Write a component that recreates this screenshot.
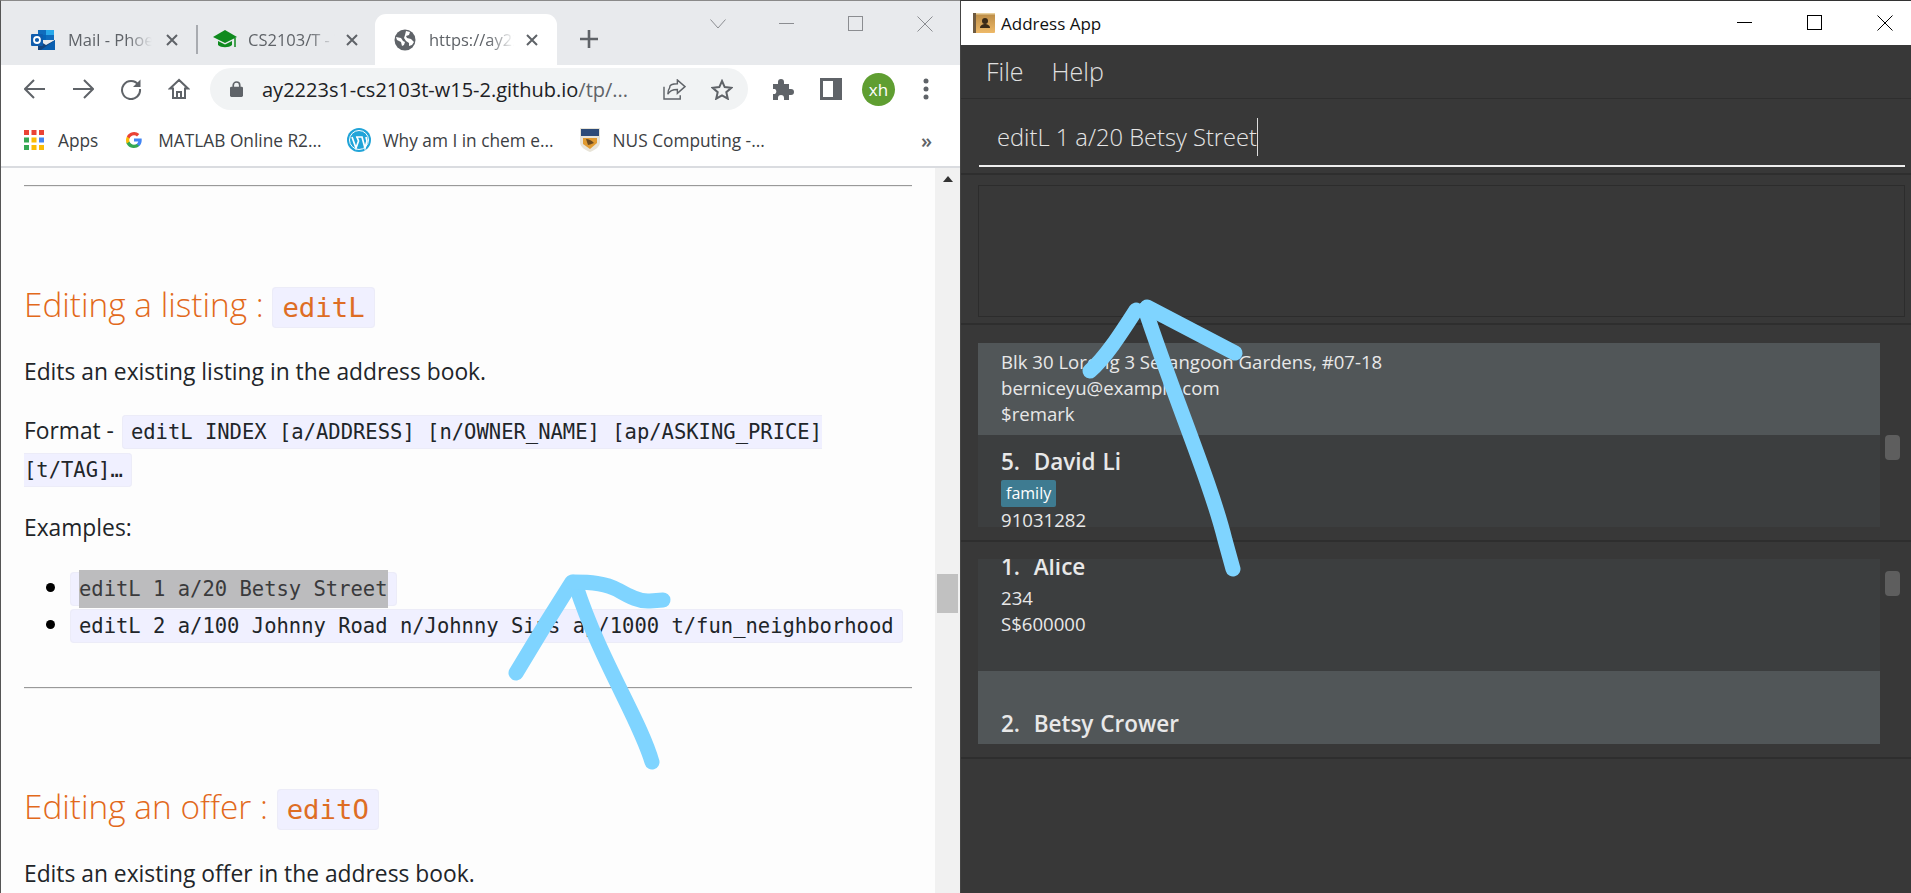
<div class="desktop">
  <section class="browser">
    <header class="tabstrip">
      <div class="tab t1">
        <svg class="fav" viewBox="0 0 24 22" width="24" height="22"><path fill="#0f6cbd" d="M7 1h16v10H7z"/><path fill="#28a8ea" d="M15 1h8v5h-8z"/><path fill="#0364b8" d="M7 6h8v5H7z"/><path fill="#14447d" d="M7 11l8 5 9-5v10H7z"/><path fill="#0a5fb0" d="M24 11v10H10z"/><rect x="0" y="5" width="12" height="12" rx="1" fill="#0f5cad"/><circle cx="6" cy="11" r="3" fill="none" stroke="#fff" stroke-width="1.8"/></svg>
        <span class="tabtext">Mail - Phoebe Tan</span>
        <svg class="x" viewBox="0 0 12 12" width="12" height="12"><path d="M1 1l10 10M11 1L1 11" stroke="#5f6368" stroke-width="2"/></svg>
      </div>
      <i class="tabsep"></i>
      <div class="tab t2">
        <svg class="fav" viewBox="0 0 24 20" width="24" height="20"><path fill="#0f8a1e" d="M12 0L0 7l12 6 12-6z"/><path fill="#0f8a1e" d="M5 11v4c3 3 11 3 14 0v-4l-7 3.500z"/><path d="M22 8v9" stroke="#0f8a1e" stroke-width="1.500"/></svg>
        <span class="tabtext">CS2103/T - Week</span>
        <svg class="x" viewBox="0 0 12 12" width="12" height="12"><path d="M1 1l10 10M11 1L1 11" stroke="#5f6368" stroke-width="2"/></svg>
      </div>
      <div class="tab active">
        <svg class="fav" viewBox="0 0 22 22" width="22" height="22"><circle cx="11" cy="11" r="10.500" fill="#5f6368"/><path fill="#fff" d="M2 8l5 1 2 3 2 1-1 3-2 1-1-4-4-2zM12 2l4 1-1 3-3 1 1 2 4 1 3 3-2 3-3 1 0-3-3-2-2-3 1-3z"/></svg>
        <span class="tabtext">https://ay2223s1</span>
        <svg class="x" viewBox="0 0 12 12" width="12" height="12"><path d="M1 1l10 10M11 1L1 11" stroke="#5f6368" stroke-width="2"/></svg>
      </div>
      <svg class="plus" viewBox="0 0 18 18" width="18" height="18"><path d="M9 0v18M0 9h18" stroke="#5f6368" stroke-width="2.600"/></svg>
      <div class="wincontrols">
        <svg viewBox="0 0 16 10" width="16" height="10"><path d="M.5.5L8 9l7.500-8.500" fill="none" stroke="#8b8d91"/></svg>
        <svg viewBox="0 0 16 16" width="16" height="16"><path d="M0 7.500h15" stroke="#8b8d91"/></svg>
        <svg viewBox="0 0 16 16" width="16" height="16"><rect x=".5" y=".5" width="14" height="14" fill="none" stroke="#8b8d91"/></svg>
        <svg viewBox="0 0 16 16" width="16" height="16"><path d="M.5.500l15 15M15.500.500l-15 15" stroke="#8b8d91"/></svg>
      </div>
    </header>

    <nav class="toolbar">
      <svg viewBox="0 0 22 20" width="22" height="20"><path d="M21 10H2M10 1l-9 9 9 9" fill="none" stroke="#5f6368" stroke-width="2"/></svg>
      <svg viewBox="0 0 22 20" width="22" height="20"><path d="M1 10h19M12 1l9 9-9 9" fill="none" stroke="#5f6368" stroke-width="2"/></svg>
      <svg viewBox="0 0 22 22" width="22" height="22"><path d="M18.500 7A9 9 0 1 0 20 11" fill="none" stroke="#5f6368" stroke-width="2"/><path d="M20.500 1.500v7.500h-7.500z" fill="#5f6368"/></svg>
      <svg viewBox="0 0 22 22" width="22" height="22"><path d="M11 2L2 10.500h3V20h12v-9.500h3zM9 20v-6h4v6" fill="none" stroke="#5f6368" stroke-width="2"/></svg>
      <div class="omnibox">
        <svg class="lock" viewBox="0 0 14 17" width="13" height="16"><path d="M3.500 7V4.500a3.500 3.500 0 0 1 7 0V7" fill="none" stroke="#5f6368" stroke-width="1.800"/><rect y="6" width="14" height="11" rx="1.500" fill="#5f6368"/></svg>
        <span class="url"><b>ay2223s1-cs2103t-w15-2.github.io</b>/tp/...</span>
        <svg class="share" viewBox="0 0 24 22" width="23" height="21"><path d="M7 9v-.5C7 6 11 5 15 5V1l8 7-8 7v-4c-5 0-8 1-10 5 0-3 .500-5 2-7z" fill="none" stroke="#5f6368" stroke-width="1.500"/><path d="M1 8v13h17v-4" fill="none" stroke="#5f6368" stroke-width="1.500"/></svg>
        <svg class="star" viewBox="0 0 22 21" width="22" height="21"><path d="M11 2l2.700 6.100 6.600.7-5 4.400 1.500 6.500L11 16.300l-5.800 3.400 1.500-6.500-5-4.400 6.600-.7z" fill="none" stroke="#5f6368" stroke-width="2"/></svg>
      </div>
      <svg class="puzzle" viewBox="0 0 22 22" width="22" height="22"><path fill="#5f6368" d="M1 6h5V4a3 3 0 0 1 6 0v2h5v5h2a3 3 0 0 1 0 6h-2v5h-5v-2a3 3 0 0 0-6 0v2H1v-6h2a3 3 0 0 0 0-5H1z"/></svg>
      <svg class="panel" viewBox="0 0 22 22" width="22" height="22"><rect width="22" height="22" fill="#5f6368"/><rect x="3" y="3" width="10" height="16" fill="#fff"/></svg>
      <span class="avatar">xh</span>
      <svg class="dots" viewBox="0 0 6 22" width="6" height="22"><circle cx="3" cy="3" r="2.500" fill="#5f6368"/><circle cx="3" cy="11" r="2.500" fill="#5f6368"/><circle cx="3" cy="19" r="2.500" fill="#5f6368"/></svg>
    </nav>

    <div class="bookmarks">
      <span class="bm apps">
        <svg viewBox="0 0 20 20" width="20" height="20">
          <rect width="5" height="5" fill="#ea4335"/><rect x="7.500" width="5" height="5" fill="#ea4335"/><rect x="15" width="5" height="5" fill="#ea4335"/>
          <rect y="7.500" width="5" height="5" fill="#34a853"/><rect x="7.500" y="7.500" width="5" height="5" fill="#fbbc05"/><rect x="15" y="7.500" width="5" height="5" fill="#4285f4"/>
          <rect y="15" width="5" height="5" fill="#34a853"/><rect x="7.500" y="15" width="5" height="5" fill="#fbbc05"/><rect x="15" y="15" width="5" height="5" fill="#fbbc05"/>
        </svg>Apps</span>
      <span class="bm matlab">
        <svg viewBox="0 0 16 16" width="16" height="16"><path d="M15.700 8.200c0-.600 0-1.100-.100-1.600H8v3h4.300c-.200 1-.700 1.800-1.600 2.400v2h2.600c1.500-1.400 2.400-3.500 2.400-5.800z" fill="#4285f4"/><path d="M8 16c2.200 0 4-.700 5.300-2l-2.600-2c-.700.500-1.600.800-2.700.800-2.100 0-3.900-1.400-4.500-3.300H.5v2.100A8 8 0 0 0 8 16z" fill="#34a853"/><path d="M3.500 9.500a4.800 4.800 0 0 1 0-3V4.400H.9a8 8 0 0 0 0 7.200z" fill="#fbbc05"/><path d="M8 3.200c1.200 0 2.200.400 3 1.200l2.300-2.300A8 8 0 0 0 .9 4.400l2.600 2.100C4.100 4.600 5.900 3.200 8 3.200z" fill="#ea4335"/></svg>MATLAB Online R2...</span>
      <span class="bm wp">
        <svg viewBox="0 0 24 24" width="24" height="24"><circle cx="12" cy="12" r="12" fill="#21a4d8"/><circle cx="12" cy="12" r="9.500" fill="none" stroke="#fff" stroke-width="1"/><path d="M5 9l4 11 2.500-7L10 9h5l3 11 2-7-1-4M9 9h3" fill="none" stroke="#fff" stroke-width="1.700"/></svg>Why am I in chem e...</span>
      <span class="bm nus">
        <svg viewBox="0 0 20 24" width="20" height="24"><path d="M0 0h20v14c0 5-5 8-10 10C5 22 0 19 0 14z" fill="#e8e4d8"/><path d="M1 1h18v7H1z" fill="#2d4b78"/><path d="M3 10h14v5l-7 6-7-5z" fill="#e09a30"/><path d="M6 11c3 0 5 1 8 4-3 1-5 2-6 2z" fill="#6a4a20"/></svg>NUS Computing -...</span>
      <span class="chev">»</span>
    </div>

    <div class="pagewrap">
      <main class="doc">
        <hr class="first" />
        <h2>Editing a listing : <code>editL</code></h2>
        <p class="after">Edits an existing listing in the address book.</p>
        <p class="format">Format - <code>editL INDEX [a/ADDRESS] [n/OWNER_NAME] [ap/ASKING_PRICE] [t/TAG]…</code></p>
        <p class="ex">Examples:</p>
        <ul>
          <li><code><span class="sel">editL 1 a/20 Betsy Street</span></code></li>
          <li><code>editL 2 a/100 Johnny Road n/Johnny Sins ap/1000 t/fun_neighborhood</code></li>
        </ul>
        <hr />
        <h2>Editing an offer : <code>editO</code></h2>
        <p class="after">Edits an existing offer in the address book.</p>
      </main>
      <aside class="pagescroll">
        <svg viewBox="0 0 10 6" width="10" height="6"><path d="M5 0l5 6H0z" fill="#333"/></svg>
        <i class="thumb"></i>
      </aside>
    </div>
  </section>

  <section class="app">
    <header class="titlebar">
      <svg viewBox="0 0 22 20" width="22" height="20"><defs><linearGradient id="book" x1="0" y1="0" x2="0" y2="1"><stop offset="0" stop-color="#b98a45"/><stop offset="1" stop-color="#eeb968"/></linearGradient></defs><rect width="22" height="20" rx="1" fill="url(#book)"/><rect width="3" height="20" fill="#6e5a40"/><rect x="3" y="0" width="19" height="1.500" fill="#e8cf9c"/><circle cx="12" cy="8" r="3" fill="#3a2a18"/><path d="M7 15c0-3 3-4 5-4s5 1 5 4z" fill="#3a2a18"/></svg>
      <span class="apptitle">Address App</span>
      <div class="appcontrols">
        <svg viewBox="0 0 16 16" width="16" height="16"><path d="M0 7.500h15" stroke="#000"/></svg>
        <svg viewBox="0 0 16 16" width="16" height="16"><rect x=".5" y=".5" width="14" height="14" fill="none" stroke="#000"/></svg>
        <svg viewBox="0 0 16 16" width="16" height="16"><path d="M.5.500l15 15M15.500.500l-15 15" stroke="#000"/></svg>
      </div>
    </header>
    <div class="menubar"><span>File</span><span>Help</span></div>
    <div class="command"><div class="cmdinput"><span>editL 1 a/20 Betsy Street</span><i class="caret"></i></div></div>
    <div class="result"><div class="resultbox"></div></div>

    <div class="listsec one">
      <div class="list">
        <div class="row sel-row">
          <div>Blk 30 Lorong 3 Serangoon Gardens, #07-18</div>
          <div>berniceyu@example.com</div>
          <div>$remark</div>
        </div>
        <div class="row">
          <div class="name">5.&nbsp; David Li</div>
          <span class="tag">family</span>
          <div>91031282</div>
        </div>
      </div>
      <i class="appthumb"></i>
    </div>

    <div class="listsec two">
      <div class="list">
        <div class="row">
          <div class="name">1.&nbsp; Alice</div>
          <div class="l1">234</div>
          <div>S$600000</div>
        </div>
        <div class="row sel-row">
          <div class="name">2.&nbsp; Betsy Crower</div>
        </div>
      </div>
      <i class="appthumb"></i>
    </div>
    <div class="rest"></div>
  </section>

  <svg class="ink" viewBox="0 0 1911 893" width="1911" height="893" fill="none" stroke="#7fd4ff" stroke-width="15" stroke-linecap="round" stroke-linejoin="round">
    <path d="M516 673L545 625L572 582"/>
    <path d="M576 586C600 660 640 720 652 762"/>
    <path d="M574 582C590 582 605 583 618 590C630 597 640 602 650 601L663 600"/>
    <path d="M1090 371C1105 358 1120 335 1136 310"/>
    <path d="M1145 309C1175 400 1210 480 1225 540L1233 569"/>
    <path d="M1147 307L1235 353"/>
  </svg>
</div>

<style>
  :global(body) { margin: 0; }
  .desktop { position: relative; width: 1911px; height: 893px; overflow: hidden; display: flex; font-family: "Open Sans", "Noto Sans", sans-serif; background: #333; }
  .ink { position: absolute; left: 0; top: 0; pointer-events: none; }

  .browser { width: 960px; flex: none; display: flex; flex-direction: column; background: #fff; border-left: 1px solid #555; box-sizing: border-box; border-top: 1px solid #8a8a8a; }
  .tabstrip { height: 64px; background: #e8eaed; display: flex; align-items: flex-end; flex: none; }
  .tab { height: 51px; display: flex; align-items: center; color: #5f6368; font-size: 16.500px; box-sizing: border-box; flex: none; }
  .t1 { width: 195px; padding-left: 30px; }
  .t2 { width: 177px; padding-left: 15px; }
  .tabsep { width: 2px; height: 29px; background: #a8abb0; margin-bottom: 11px; flex: none; }
  .active { width: 182px; background: #fff; border-radius: 11px 11px 0 0; padding-left: 19px; }
  .tabtext { flex: none; margin-left: 13px; white-space: nowrap; overflow: hidden; mask-image: linear-gradient(to right, #000 70%, transparent 100%); -webkit-mask-image: linear-gradient(to right, #000 70%, transparent 100%); }
  .t1 .tabtext { width: 84px; }
  .t2 .tabtext { width: 87px; margin-left: 11px; }
  .active .tabtext { width: 85px; }
  .fav { flex: none; }
  .x { margin-left: 12px; flex: none; }
  .t1 .x { margin-left: 14px; }
  .t2 .x { margin-left: 11px; }
  .plus { margin: 0 0 17px 23px; flex: none; }
  .wincontrols { display: flex; align-items: center; gap: 53px; margin-left: 112px; align-self: flex-start; margin-top: 15px; height: 16px; }

  .toolbar { height: 60px; flex: none; display: flex; align-items: center; background: #fff; padding-left: 23px; box-sizing: border-box; }
  .toolbar > svg { margin-top: -12px; flex: none; }
  .toolbar > svg:nth-child(2), .toolbar > svg:nth-child(3), .toolbar > svg:nth-child(4) { margin-left: 26px; }
  .omnibox { margin-left: 20px; width: 538px; height: 42px; border-radius: 21px; background: #f1f3f4; display: flex; align-items: center; flex: none; margin-top: -12px; padding-left: 20px; box-sizing: border-box; }
  .url { margin-left: 19px; width: 370px; flex: none; font-size: 20px; color: #5f6368; white-space: nowrap; }
  .url b { font-weight: 400; color: #202124; }
  .share { margin-left: 31px; flex: none; }
  .star { margin-left: 25px; flex: none; }
  .toolbar > .puzzle { margin-left: 24px; }
  .toolbar > .panel { margin-left: 26px; }
  .avatar { margin-left: 20px; width: 33px; height: 33px; border-radius: 50%; background: #5f9e31; color: #fff; display: flex; align-items: center; justify-content: center; font-size: 17px; margin-top: -12px; flex: none; }
  .toolbar > .dots { margin-left: 28px; }

  .bookmarks { height: 42px; margin-top: -6px; padding-bottom: 5px; flex: none; background: #fff; display: flex; align-items: center; color: #3c4043; font-size: 17.300px; border-bottom: 2px solid #dadce0; white-space: nowrap; }
  .bm { display: flex; align-items: center; gap: 14px; flex: none; }
  .apps { margin-left: 23px; }
  .matlab { margin-left: 28px; gap: 16px; }
  .wp { margin-left: 25px; gap: 12px; }
  .nus { margin-left: 26px; gap: 13px; }
  .chev { margin-left: auto; margin-right: 28px; font-size: 20px; font-weight: 600; color: #5f6368; }

  .pagewrap { flex: 1; display: flex; min-height: 0; background: #fdfdfd; overflow: hidden; }
  .doc { flex: 1; padding: 17px 23px 0 23px; min-width: 0; color: #212529; font-size: 22.800px; }
  hr { border: 0; border-top: 1px solid #999; border-bottom: 1px solid #eee; margin: 0; height: 0; }
  hr:not(.first) { margin-top: 45px; }
  h2 { margin: 96px 0 0; font-weight: 300; font-size: 33.400px; line-height: 42px; color: #e2691b; white-space: nowrap; }
  p { margin: 0; }
  .after { margin-top: 33px; line-height: 28px; }
  .format { margin-top: 26px; line-height: 38px; }
  .format code { margin-left: 2px; }
  .ex { margin-top: 26px; line-height: 28px; }
  ul { margin: 26px 0 0; padding: 0 0 0 46px; line-height: 37px; }
  li { height: 37px; }
  li::marker { font-size: 24px; color: #000; }
  code { font-family: "DejaVu Sans Mono", "Liberation Mono", monospace; font-size: 20.500px; line-height: 1; background: #f0f0ff; border: 1px solid #ececf8; border-radius: 4px; padding: 4px 8px; color: #212529; }
  h2 code { font-size: 27.300px; color: #de6d24; padding: 4px 9px; margin-left: 0; }
  .sel { background: #bcbcbe; padding: 7px 0; color: #3a3a3c; }
  .pagescroll { width: 25px; flex: none; background: #f1f1f1; display: flex; flex-direction: column; align-items: center; padding-top: 8px; box-sizing: border-box; }
  .thumb { width: 21px; height: 39px; background: #c1c1c1; margin-top: 392px; }

  .app { flex: 1; display: flex; flex-direction: column; background: #383838; border-top: 1px solid #333; border-left: 1px solid #444; box-sizing: border-box; }
  .titlebar { height: 44px; flex: none; background: #fff; display: flex; align-items: center; padding-left: 12px; }
  .apptitle { margin-left: 6px; font-size: 17px; color: #111; }
  .appcontrols { margin-left: auto; display: flex; gap: 54px; margin-right: 18px; }
  .menubar { height: 54px; flex: none; display: flex; align-items: center; gap: 28px; padding: 0 0 2px 25px; box-sizing: border-box; border-bottom: 1px solid #2e2e2e; color: #e0e0e0; font-size: 25px; font-weight: 300; }
  .command { height: 76px; flex: none; padding: 0 6px 0 18px; border-bottom: 2px solid #2e2e2e; box-sizing: border-box; }
  .cmdinput { height: 68px; border-bottom: 2px solid #eee; display: flex; align-items: center; padding: 10px 0 0 18px; color: #e6e6e6; font-size: 23.700px; font-weight: 300; box-sizing: border-box; }
  .caret { width: 1px; height: 38px; background: #ddd; }
  .result { flex: none; height: 150px; padding: 10px 6px 8px 17px; border-bottom: 2px solid #2e2e2e; box-sizing: border-box; }
  .resultbox { height: 130px; border: 1px solid #2c2c2c; }
  .listsec { flex: none; display: flex; padding: 18px 0 15px 17px; border-bottom: 2px solid #2e2e2e; box-sizing: border-box; height: 217px; color: #e8e8e8; font-size: 18.600px; line-height: 26px; }
  .two { padding-top: 17px; }
  .list { width: 902px; height: 184px; overflow: hidden; background: #3c3e3f; flex: none; }
  .two .list { height: 185px; }
  .row { height: 92px; padding: 6px 23px; box-sizing: border-box; background: #3c3e3f; overflow: hidden; white-space: nowrap; }
  .two .row { height: 112px; padding-top: 0; }
  .two .sel-row { padding-top: 38px; }
  .sel-row { background: #515658; }
  .name { font-size: 22.500px; font-weight: 600; line-height: 30px; word-spacing: 1px; }
  .one .name { margin-top: 6px; }
  .two .row .name { margin-top: -7px; }
  .two .sel-row .name { margin-top: 0; }
  .l1 { margin-top: 3px; }
  .tag { display: block; width: max-content; background: #3e7b91; color: #fff; font-size: 16px; line-height: 27px; padding: 0 5px; border-radius: 2px; margin-top: 3px; font-weight: 400; }
  .appthumb { width: 15px; height: 25px; background: #5e5e5e; border-radius: 4px; margin-left: 5px; flex: none; }
  .one .appthumb { margin-top: 92px; }
  .two .appthumb { margin-top: 12px; }
  .rest { flex: 1; }
</style>
